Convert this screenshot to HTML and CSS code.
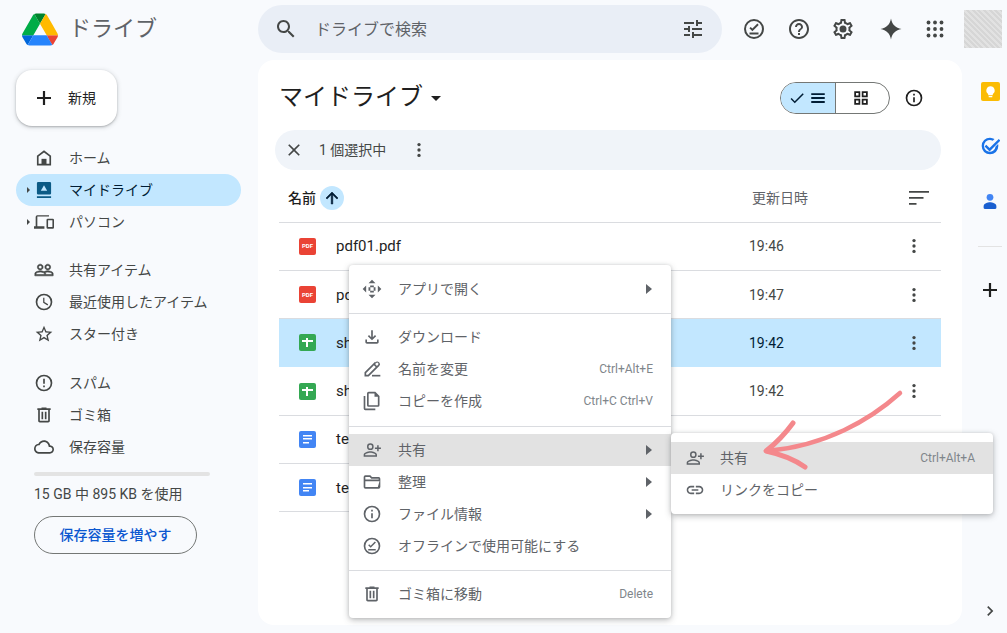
FILE: index.html
```html
<!DOCTYPE html>
<html lang="ja">
<head>
<meta charset="utf-8">
<title>ドライブ</title>
<link rel="stylesheet" href="styles.css">
</head>
<body>
<svg class="defs" xmlns="http://www.w3.org/2000/svg">
  <symbol id="i-search" viewBox="0 0 24 24"><path d="M15.5 14h-.79l-.28-.27C15.41 12.59 16 11.11 16 9.5 16 5.91 13.09 3 9.5 3S3 5.91 3 9.5 5.91 16 9.5 16c1.61 0 3.09-.59 4.23-1.57l.27.28v.79l5 4.99L20.49 19l-4.99-5zm-6 0C7.01 14 5 11.99 5 9.5S7.01 5 9.5 5 14 7.01 14 9.5 11.99 14 9.5 14z"/></symbol>
  <symbol id="i-tune" viewBox="0 0 24 24"><path d="M3 17v2h6v-2H3zM3 5v2h10V5H3zm10 16v-2h8v-2h-8v-2h-2v6h2zM7 9v2H3v2h4v2h2V9H7zm14 4v-2H11v2h10zm-6-4h2V7h4V5h-4V3h-2v6z"/></symbol>
  <symbol id="i-offline" viewBox="0 0 24 24"><path d="M12 2a10 10 0 1 0 0 20 10 10 0 0 0 0-20zm0 18a8 8 0 1 1 0-16 8 8 0 0 1 0 16z"/><path d="M7.5 15.6h9v1.8h-9zM10.4 14.2l-3-3 1.3-1.3 1.7 1.7 5-5 1.3 1.3z"/></symbol>
  <symbol id="i-help" viewBox="0 0 24 24"><path d="M11 18h2v-2h-2v2zm1-16C6.48 2 2 6.48 2 12s4.48 10 10 10 10-4.48 10-10S17.52 2 12 2zm0 18c-4.41 0-8-3.59-8-8s3.59-8 8-8 8 3.59 8 8-3.59 8-8 8zm0-14c-2.21 0-4 1.79-4 4h2c0-1.1.9-2 2-2s2 .9 2 2c0 2-3 1.75-3 5h2c0-2.25 3-2.5 3-5 0-2.21-1.79-4-4-4z"/></symbol>
  <symbol id="i-gear" viewBox="0 0 24 24"><path d="M19.43 12.98c.04-.32.07-.64.07-.98 0-.34-.03-.66-.07-.98l2.11-1.65c.19-.15.24-.42.12-.64l-2-3.46c-.09-.16-.26-.25-.44-.25-.06 0-.12.01-.17.03l-2.49 1c-.52-.4-1.08-.73-1.69-.98l-.38-2.65C14.46 2.18 14.25 2 14 2h-4c-.25 0-.46.18-.49.42l-.38 2.65c-.61.25-1.17.59-1.69.98l-2.49-1c-.06-.02-.12-.03-.18-.03-.17 0-.34.09-.43.25l-2 3.46c-.13.22-.07.49.12.64l2.11 1.65c-.04.32-.07.65-.07.98 0 .33.03.66.07.98l-2.11 1.65c-.19.15-.24.42-.12.64l2 3.46c.09.16.26.25.44.25.06 0 .12-.01.17-.03l2.49-1c.52.4 1.08.73 1.69.98l.38 2.65c.03.24.24.42.49.42h4c.25 0 .46-.18.49-.42l.38-2.65c.61-.25 1.17-.59 1.69-.98l2.49 1c.06.02.12.03.18.03.17 0 .34-.09.43-.25l2-3.46c.12-.22.07-.49-.12-.64l-2.11-1.65zm-1.98-1.71c.04.31.05.52.05.73 0 .21-.02.43-.05.73l-.14 1.13.89.7 1.08.84-.7 1.21-1.27-.51-1.04-.42-.9.68c-.43.32-.84.56-1.25.73l-1.06.43-.16 1.13-.2 1.35h-1.4l-.19-1.35-.16-1.13-1.06-.43c-.43-.18-.83-.41-1.23-.71l-.91-.7-1.06.43-1.27.51-.7-1.21 1.08-.84.89-.7-.14-1.13c-.03-.31-.05-.54-.05-.74s.02-.43.05-.73l.14-1.13-.89-.7-1.08-.84.7-1.21 1.27.51 1.04.42.9-.68c.43-.32.84-.56 1.25-.73l1.06-.43.16-1.13.2-1.35h1.39l.19 1.35.16 1.13 1.06.43c.43.18.83.41 1.23.71l.91.7 1.06-.43 1.27-.51.7 1.21-1.07.85-.89.7.14 1.13zM12 8.5a3.5 3.5 0 1 0 0 7 3.5 3.5 0 0 0 0-7z"/></symbol>
  <symbol id="i-gem" viewBox="0 0 24 24"><path d="M12 1.5c.9 5.8 4.7 9.6 10.5 10.5-5.8.9-9.6 4.7-10.5 10.5-.9-5.800-4.700-9.600-10.500-10.500C7.300 11.100 11.100 7.300 12 1.500z"/></symbol>
  <symbol id="i-apps" viewBox="0 0 24 24"><g><circle cx="5.500" cy="5.500" r="1.900"/><circle cx="12" cy="5.500" r="1.900"/><circle cx="18.500" cy="5.500" r="1.900"/><circle cx="5.500" cy="12" r="1.900"/><circle cx="12" cy="12" r="1.900"/><circle cx="18.500" cy="12" r="1.900"/><circle cx="5.500" cy="18.500" r="1.900"/><circle cx="12" cy="18.500" r="1.900"/><circle cx="18.500" cy="18.500" r="1.900"/></g></symbol>
  <symbol id="i-plus" viewBox="0 0 24 24"><path d="M19 13.100h-5.900V19h-2.200v-5.900H5v-2.200h5.900V5h2.200v5.900H19z"/></symbol>
  <symbol id="i-home" viewBox="0 0 24 24"><path d="M12 2.800 3.500 9.200V21h17V9.200L12 2.800zm6.500 16.200H5.500v-8.800L12 5.300l6.500 4.900V19z"/><path d="M9 13h6v7H9z"/></symbol>
  <symbol id="i-drive" viewBox="0 0 24 24"><path d="M5 2.500h14A1.500 1.500 0 0 1 20.500 4v12a1.500 1.500 0 0 1-1.500 1.500H5A1.500 1.500 0 0 1 3.500 16V4A1.500 1.500 0 0 1 5 2.500zM3.500 19.500h17v2h-17z"/><path fill="#c2e7ff" d="M12 6.200 8.200 12.800h7.600z"/></symbol>
  <symbol id="i-pc" viewBox="0 0 24 24"><path d="M4 5.500h14V4H4a2 2 0 0 0-2 2v11H0v3h12.500v-3H4V5.500z"/><path d="M22.500 8h-6a1.500 1.500 0 0 0-1.500 1.500v9a1.500 1.500 0 0 0 1.500 1.500h6a1.500 1.500 0 0 0 1.500-1.500v-9A1.500 1.500 0 0 0 22.500 8zm-.4 10h-5.200v-8h5.200v8z"/></symbol>
  <symbol id="i-people" viewBox="0 0 24 24"><path stroke="#444746" stroke-width=".7" d="M16.500 13c-1.200 0-3.070.34-4.500 1-1.430-.67-3.300-1-4.500-1C5.330 13 1 14.080 1 16.250V19h22v-2.750c0-2.170-4.330-3.250-6.500-3.250zm-4 4.500h-10v-1.250c0-.54 2.560-1.750 5-1.750s5 1.210 5 1.750v1.250zm9 0H14v-1.250c0-.46-.2-.86-.52-1.220.88-.3 1.960-.53 3.020-.53 2.440 0 5 1.210 5 1.750v1.250zM7.500 12c1.930 0 3.500-1.570 3.500-3.500S9.430 5 7.500 5 4 6.570 4 8.500 5.570 12 7.500 12zm0-5.500c1.100 0 2 .9 2 2s-.9 2-2 2-2-.9-2-2 .9-2 2-2zm9 5.500c1.930 0 3.500-1.570 3.500-3.500S18.430 5 16.500 5 13 6.570 13 8.500s1.570 3.500 3.500 3.500zm0-5.500c1.100 0 2 .9 2 2s-.9 2-2 2-2-.9-2-2 .9-2 2-2z"/></symbol>
  <symbol id="i-clock" viewBox="0 0 24 24"><path d="M12 2a10 10 0 1 0 0 20 10 10 0 0 0 0-20zm0 18a8 8 0 1 1 0-16 8 8 0 0 1 0 16z"/><path d="M12.500 7H11v6l5.200 3.100.8-1.300-4.500-2.700z"/></symbol>
  <symbol id="i-star" viewBox="0 0 24 24"><path d="M22 9.240l-7.190-.62L12 2 9.190 8.630 2 9.240l5.460 4.730L5.820 21 12 17.270 18.180 21l-1.630-7.030L22 9.240zM12 15.400l-3.760 2.270 1-4.280-3.320-2.880 4.380-.38L12 6.100l1.710 4.040 4.380.38-3.320 2.880 1 4.280L12 15.400z"/></symbol>
  <symbol id="i-spam" viewBox="0 0 24 24"><path d="M12 2a10 10 0 1 0 0 20 10 10 0 0 0 0-20zm0 18a8 8 0 1 1 0-16 8 8 0 0 1 0 16z"/><path d="M11 7h2v6h-2zM11 15h2v2h-2z"/></symbol>
  <symbol id="i-trash" viewBox="0 0 24 24"><path d="M15 4V3H9v1H4v2h1v13c0 1.100.9 2 2 2h10c1.100 0 2-.9 2-2V6h1V4h-5zm2 15H7V6h10v13zM9 8h2v9H9zm4 0h2v9h-2z"/></symbol>
  <symbol id="i-cloud" viewBox="0 0 24 24"><path d="M19.350 10.040C18.670 6.590 15.640 4 12 4 9.110 4 6.600 5.640 5.350 8.040 2.340 8.360 0 10.910 0 14c0 3.310 2.690 6 6 6h13c2.760 0 5-2.240 5-5 0-2.640-2.050-4.780-4.650-4.960zM19 18H6c-2.210 0-4-1.790-4-4 0-2.050 1.530-3.760 3.560-3.970l1.070-.11.5-.95C8.080 7.140 9.940 6 12 6c2.620 0 4.880 1.860 5.390 4.430l.3 1.500 1.530.11c1.560.1 2.780 1.410 2.780 2.960 0 1.650-1.350 3-3 3z"/></symbol>
  <symbol id="i-info" viewBox="0 0 24 24"><path d="M12 2a10 10 0 1 0 0 20 10 10 0 0 0 0-20zm0 18a8 8 0 1 1 0-16 8 8 0 0 1 0 16z"/><path d="M11 11h2v6h-2zM11 7h2v2h-2z"/></symbol>
  <symbol id="i-close" viewBox="0 0 24 24"><path d="M19 6.410 17.590 5 12 10.590 6.410 5 5 6.410 10.590 12 5 17.590 6.410 19 12 13.410 17.590 19 19 17.590 13.410 12z"/></symbol>
  <symbol id="i-dots" viewBox="0 0 24 24"><circle cx="12" cy="5.500" r="2"/><circle cx="12" cy="12" r="2"/><circle cx="12" cy="18.500" r="2"/></symbol>
  <symbol id="i-check" viewBox="0 0 24 24"><path d="M9 16.200 4.800 12l-1.400 1.400L9 19 21 7l-1.400-1.400z"/></symbol>
  <symbol id="i-menu" viewBox="0 0 24 24"><path d="M3 18.500h18v-2.400H3zM3 13.200h18v-2.400H3zM3 5.500v2.400h18V5.500z"/></symbol>
  <symbol id="i-grid" viewBox="0 0 24 24"><path d="M3 3h8v8H3zm2.300 2.300v3.400h3.400V5.300zM13 3h8v8h-8zm2.300 2.300v3.400h3.400V5.300zM3 13h8v8H3zm2.300 2.300v3.400h3.400v-3.400zM13 13h8v8h-8zm2.300 2.300v3.400h3.400v-3.400z"/></symbol>
  <symbol id="i-up" viewBox="0 0 24 24"><path stroke="#001d35" stroke-width=".8" d="M4 12l1.410 1.410L11 7.830V20h2V7.830l5.580 5.590L20 12l-8-8z"/></symbol>
  <symbol id="i-sort" viewBox="0 0 24 24"><path d="M2 5h20v1.800H2zM2 11h14.500v1.800H2zM2 17h7.500v1.800H2z"/></symbol>
  <symbol id="i-open" viewBox="0 0 24 24"><path d="M12 .8 7.800 5h8.400zM12 23.200 16.200 19H7.800zM.8 12 5 16.200V7.800zM23.200 12 19 7.800v8.400z"/><path d="M9.800 7.800h4.400v2.200H9.800zM9.800 14h4.400v2.200H9.800zM7.800 9.800H10v4.400H7.800zM14 9.800h2.200v4.400H14z"/></symbol>
  <symbol id="i-download" viewBox="0 0 24 24"><path d="M18 15v3H6v-3H4v3c0 1.100.9 2 2 2h12c1.100 0 2-.9 2-2v-3h-2zm-1-4-1.410-1.410L13 12.170V4h-2v8.170L8.410 9.590 7 11l5 5 5-5z"/></symbol>
  <symbol id="i-rename" viewBox="0 0 24 24"><path d="M15.700 3.300 3 16v5h5L20.700 8.300a2.800 2.800 0 0 0 0-4 3.600 3.600 0 0 0-5 0zM7.200 19H5v-2.200l9.300-9.300 2.200 2.200L7.200 19zM19.300 6.900l-1.400 1.400-2.200-2.200 1.400-1.400a1.550 1.550 0 0 1 2.200 2.200z"/><path d="M12 19h10v2H12z"/></symbol>
  <symbol id="i-copy" viewBox="0 0 24 24"><path d="M16 1H8a2 2 0 0 0-2 2v14a2 2 0 0 0 2 2h11a2 2 0 0 0 2-2V6zm3 16H8V3h7v4h4z"/><path d="M4 6H2v15a2 2 0 0 0 2 2h12v-2H4z"/></symbol>
  <symbol id="i-share" viewBox="0 0 24 24"><path d="M10 12a4 4 0 1 0 0-8 4 4 0 0 0 0 8zm0-6.200a2.200 2.200 0 1 1 0 4.400 2.200 2.200 0 0 1 0-4.400zM10 13.500c-3 0-8 1.500-8 4.200V20h16v-2.300c0-2.700-5-4.200-8-4.200zm6.200 4.700H3.800v-.5c0-.9 3.300-2.400 6.200-2.400s6.200 1.500 6.200 2.400zM20 9V6.300h-1.800V9h-2.700v1.800h2.700v2.700H20v-2.700h2.700V9z"/></symbol>
  <symbol id="i-folder" viewBox="0 0 24 24"><path d="M20 6h-8l-2-2H4a2 2 0 0 0-2 2v12a2 2 0 0 0 2 2h16a2 2 0 0 0 2-2V8a2 2 0 0 0-2-2zM4 6h5.200l2 2H20v1H4zm0 12V11h17l-2 7z"/></symbol>
  <symbol id="i-link" viewBox="0 0 24 24"><path d="M3.900 12c0-1.710 1.390-3.100 3.100-3.100h4V7H7c-2.760 0-5 2.240-5 5s2.240 5 5 5h4v-1.900H7c-1.710 0-3.100-1.390-3.100-3.100zM8 13h8v-2H8v2zm9-6h-4v1.900h4c1.710 0 3.100 1.390 3.100 3.100s-1.390 3.100-3.100 3.100h-4V17h4c2.760 0 5-2.240 5-5s-2.240-5-5-5z"/></symbol>
  <symbol id="i-chevron" viewBox="0 0 24 24"><path d="M10 6 8.600 7.400l4.600 4.600-4.600 4.600L10 18l6-6z"/></symbol>
</svg>

<div class="app">
  <header class="topbar">
    <div class="brand">
      <svg class="logo" viewBox="0 0 87.300 78" xmlns="http://www.w3.org/2000/svg">
        <path d="m6.600 66.850 3.850 6.650c.8 1.400 1.950 2.500 3.300 3.300l13.750-23.800h-27.500c0 1.550.4 3.100 1.200 4.500z" fill="#0066da"/>
        <path d="m43.650 25-13.750-23.800c-1.350.8-2.500 1.900-3.300 3.300l-25.400 44a9.060 9.060 0 0 0 -1.200 4.500h27.500z" fill="#00ac47"/>
        <path d="m73.550 76.800c1.350-.8 2.500-1.900 3.300-3.300l1.600-2.750 7.650-13.250c.8-1.400 1.200-2.950 1.200-4.500h-27.502l5.852 11.500z" fill="#ea4335"/>
        <path d="m43.650 25 13.750-23.800c-1.350-.8-2.900-1.200-4.500-1.200h-18.500c-1.600 0-3.150.45-4.500 1.200z" fill="#00832d"/>
        <path d="m59.800 53h-32.300l-13.750 23.800c1.350.8 2.900 1.200 4.500 1.200h50.800c1.600 0 3.150-.45 4.500-1.200z" fill="#2684fc"/>
        <path d="m73.400 26.500-12.700-22c-.8-1.400-1.950-2.500-3.300-3.300l-13.750 23.800 16.150 28h27.450c0-1.550-.4-3.100-1.200-4.500z" fill="#ffba00"/>
      </svg>
      <span class="brand-name">ドライブ</span>
    </div>
    <div class="search">
      <svg class="ic ic-24"><use href="#i-search"/></svg>
      <span class="search-text">ドライブで検索</span>
      <svg class="ic ic-24"><use href="#i-tune"/></svg>
    </div>
    <div class="tools">
      <svg class="ic ic-24"><use href="#i-offline"/></svg>
      <svg class="ic ic-24"><use href="#i-help"/></svg>
      <svg class="ic ic-24"><use href="#i-gear"/></svg>
      <svg class="ic ic-24 tool-gem"><use href="#i-gem"/></svg>
      <svg class="ic ic-24"><use href="#i-apps"/></svg>
      <div class="avatar"></div>
    </div>
  </header>

  <div class="workspace">
    <aside class="sidebar">
      <button class="new-btn">
        <svg class="ic ic-24 dark"><use href="#i-plus"/></svg>
        <span>新規</span>
      </button>
      <nav class="nav-group">
        <div class="nav-item"><span class="caret-slot"></span><svg class="ic ic-20"><use href="#i-home"/></svg><span>ホーム</span></div>
        <div class="nav-item selected"><span class="caret-slot"><i class="caret"></i></span><svg class="ic ic-20 drive-ic"><use href="#i-drive"/></svg><span>マイドライブ</span></div>
        <div class="nav-item"><span class="caret-slot"><i class="caret"></i></span><svg class="ic ic-20"><use href="#i-pc"/></svg><span>パソコン</span></div>
      </nav>
      <nav class="nav-group">
        <div class="nav-item"><span class="caret-slot"></span><svg class="ic ic-20"><use href="#i-people"/></svg><span>共有アイテム</span></div>
        <div class="nav-item"><span class="caret-slot"></span><svg class="ic ic-20"><use href="#i-clock"/></svg><span>最近使用したアイテム</span></div>
        <div class="nav-item"><span class="caret-slot"></span><svg class="ic ic-20"><use href="#i-star"/></svg><span>スター付き</span></div>
      </nav>
      <nav class="nav-group nav-group-last">
        <div class="nav-item"><span class="caret-slot"></span><svg class="ic ic-20"><use href="#i-spam"/></svg><span>スパム</span></div>
        <div class="nav-item"><span class="caret-slot"></span><svg class="ic ic-20"><use href="#i-trash"/></svg><span>ゴミ箱</span></div>
        <div class="nav-item"><span class="caret-slot"></span><svg class="ic ic-20"><use href="#i-cloud"/></svg><span>保存容量</span></div>
      </nav>
      <div class="storage">
        <div class="storage-bar"></div>
        <div class="storage-text">15 GB 中 895 KB を使用</div>
        <button class="storage-btn">保存容量を増やす</button>
      </div>
    </aside>

    <main class="card">
      <div class="title-row">
        <h1 class="title">マイドライブ</h1>
        <i class="title-caret"></i>
        <div class="view-toggle">
          <div class="view-on"><svg class="ic ic-18 navy"><use href="#i-check"/></svg><svg class="ic ic-18 navy"><use href="#i-menu"/></svg></div>
          <div class="view-off"><svg class="ic ic-18 dark"><use href="#i-grid"/></svg></div>
        </div>
        <svg class="ic ic-20 dark info"><use href="#i-info"/></svg>
      </div>

      <div class="selection">
        <svg class="ic ic-20"><use href="#i-close"/></svg>
        <span class="selection-text">1 個選択中</span>
        <svg class="ic ic-20"><use href="#i-dots"/></svg>
      </div>

      <div class="list-head">
        <div class="head-name"><span class="head-label">名前</span><span class="sort-btn"><svg class="ic ic-18 navy"><use href="#i-up"/></svg></span></div>
        <div class="head-date">更新日時</div>
        <svg class="ic ic-24"><use href="#i-sort"/></svg>
      </div>

      <div class="row">
        <div class="row-name"><span class="file file-pdf">PDF</span><span>pdf01.pdf</span></div>
        <div class="row-date">19:46</div>
        <svg class="ic ic-20"><use href="#i-dots"/></svg>
      </div>
      <div class="row">
        <div class="row-name"><span class="file file-pdf">PDF</span><span>pdf02.pdf</span></div>
        <div class="row-date">19:47</div>
        <svg class="ic ic-20"><use href="#i-dots"/></svg>
      </div>
      <div class="row row-selected">
        <div class="row-name"><span class="file file-sheet"><i></i></span><span>sheet01</span></div>
        <div class="row-date">19:42</div>
        <svg class="ic ic-20"><use href="#i-dots"/></svg>
      </div>
      <div class="row">
        <div class="row-name"><span class="file file-sheet"><i></i></span><span>sheet02</span></div>
        <div class="row-date">19:42</div>
        <svg class="ic ic-20"><use href="#i-dots"/></svg>
      </div>
      <div class="row">
        <div class="row-name"><span class="file file-doc"><i></i></span><span>text01</span></div>
      </div>
      <div class="row">
        <div class="row-name"><span class="file file-doc"><i></i></span><span>text02</span></div>
      </div>
    </main>

    <aside class="rail">
      <div class="rail-keep">
        <svg viewBox="0 0 18 18" class="rail-keep-ic"><path fill="#fff" d="M9 4a4 4 0 0 0-2.200 7.300V12.500h4.400v-1.200A4 4 0 0 0 9 4zM7.300 13.300h3.400v1.200H7.300z"/></svg>
      </div>
      <svg class="rail-tasks" viewBox="0 0 24 24"><path fill="#1a73e8" d="M12 2a10 10 0 1 0 10 10c0-.8-.1-1.600-.3-2.400l-3 3A7 7 0 1 1 15.300 5.800l2.100-2.100A10 10 0 0 0 12 2z"/><path fill="#1a73e8" d="M22.500 3.500 11.500 14.500 7.500 10.500l-2 2 6 6 13-13z"/></svg>
      <svg class="rail-contact" viewBox="0 0 24 24"><circle cx="12" cy="7" r="4.500" fill="#4285f4"/><path fill="#1a5fd0" d="M3.500 21v-2.500c0-3.300 5.500-5 8.500-5s8.500 1.700 8.500 5V21a1.500 1.500 0 0 1-1.500 1.500H5A1.500 1.500 0 0 1 3.500 21z"/></svg>
      <div class="rail-divider"></div>
      <svg class="ic ic-24 dark rail-plus"><use href="#i-plus"/></svg>
      <svg class="ic ic-20 rail-chevron"><use href="#i-chevron"/></svg>
    </aside>
  </div>

  <div class="menu context-menu">
    <div class="menu-item"><svg class="ic ic-20"><use href="#i-open"/></svg><span class="menu-label">アプリで開く</span><i class="menu-arrow"></i></div>
    <div class="menu-sep"></div>
    <div class="menu-item"><svg class="ic ic-20"><use href="#i-download"/></svg><span class="menu-label">ダウンロード</span></div>
    <div class="menu-item"><svg class="ic ic-20"><use href="#i-rename"/></svg><span class="menu-label">名前を変更</span><span class="shortcut">Ctrl+Alt+E</span></div>
    <div class="menu-item"><svg class="ic ic-20"><use href="#i-copy"/></svg><span class="menu-label">コピーを作成</span><span class="shortcut">Ctrl+C Ctrl+V</span></div>
    <div class="menu-sep"></div>
    <div class="menu-item active"><svg class="ic ic-20"><use href="#i-share"/></svg><span class="menu-label">共有</span><i class="menu-arrow"></i></div>
    <div class="menu-item"><svg class="ic ic-20"><use href="#i-folder"/></svg><span class="menu-label">整理</span><i class="menu-arrow"></i></div>
    <div class="menu-item"><svg class="ic ic-20"><use href="#i-info"/></svg><span class="menu-label">ファイル情報</span><i class="menu-arrow"></i></div>
    <div class="menu-item"><svg class="ic ic-20"><use href="#i-offline"/></svg><span class="menu-label">オフラインで使用可能にする</span></div>
    <div class="menu-sep"></div>
    <div class="menu-item"><svg class="ic ic-20"><use href="#i-trash"/></svg><span class="menu-label">ゴミ箱に移動</span><span class="shortcut">Delete</span></div>
  </div>

  <div class="menu sub-menu">
    <div class="menu-item active"><svg class="ic ic-20"><use href="#i-share"/></svg><span class="menu-label">共有</span><span class="shortcut">Ctrl+Alt+A</span></div>
    <div class="menu-item"><svg class="ic ic-20"><use href="#i-link"/></svg><span class="menu-label">リンクをコピー</span></div>
  </div>

  <svg class="annotation" viewBox="0 0 1007 633" xmlns="http://www.w3.org/2000/svg">
    <path d="M900 393C870 420 825 446 767 451" fill="none" stroke="#f4888c" stroke-width="4.500" stroke-linecap="round"/>
    <path d="M793 423C785 434 775 444 766 451C780 454 795 460 805 467" fill="none" stroke="#f4888c" stroke-width="5" stroke-linecap="round" stroke-linejoin="round"/>
  </svg>
</div>
</body>
</html>
```

FILE: styles.css
```css
* { box-sizing: border-box; }
html, body { margin: 0; padding: 0; height: 100%; overflow: hidden; }
body {
  background: #f8fafd;
  color: #444746;
  font-family: Roboto, "Noto Sans CJK JP", sans-serif;
  font-size: 14px;
}
.defs { display: none; }

.ic { display: block; flex: none; fill: #444746; }
.ic-24 { width: 24px; height: 24px; }
.ic-20 { width: 20px; height: 20px; }
.ic-18 { width: 18px; height: 18px; }
.dark { fill: #1f1f1f; }
.navy { fill: #001d35; }

.app { position: relative; width: 1007px; height: 633px; display: flex; flex-direction: column; }

/* top bar */
.topbar { height: 58px; flex: none; display: flex; align-items: center; }
.brand { width: 258px; flex: none; display: flex; align-items: center; padding-left: 22px; gap: 11px; }
.logo { width: 36px; height: 33px; display: block; }
.brand-name { font-size: 22px; color: #5f6368; line-height: 32px; }
.search {
  width: 464px; height: 48px; flex: none;
  background: #e9eef6; border-radius: 24px;
  display: flex; align-items: center;
  padding: 0 17px 0 16px;
}
.search-text { flex: 1; margin-left: 17px; padding-bottom: 2px; font-size: 16px; color: #5f6368; }
.tools { display: flex; align-items: center; gap: 20.5px; margin-left: 20px; }
.tool-gem { margin-left: 3px; }
.avatar {
  width: 38px; height: 38px; margin-left: -3.5px;
  background: repeating-linear-gradient(45deg, #d6d6d6 0 2px, #e2e2e2 2px 4px);
}

/* layout */
.workspace { flex: 1; min-height: 0; display: flex; }

/* sidebar */
.sidebar { width: 258px; flex: none; }
.new-btn {
  display: flex; align-items: center; gap: 12px;
  width: 101px; height: 56px; margin: 12px 0 16px 16px; padding: 0 0 0 16px;
  background: #fff; border: 0; border-radius: 16px;
  box-shadow: 0 1px 2px rgba(60,64,67,.3), 0 1px 4px 1px rgba(60,64,67,.15);
  font: inherit; color: #1f1f1f;
}
.new-btn span { padding-bottom: 3px; }
.nav-group { margin-bottom: 16px; }
.nav-group-last { margin-top: 17px; margin-bottom: 9px; }
.nav-item {
  display: flex; align-items: center;
  width: 225px; height: 32px; margin-left: 16px; padding-left: 9px;
  border-radius: 16px; color: #444746;
}
.nav-item > span:last-child { margin-left: 15px; padding-bottom: 2px; }
.nav-item.selected { background: #c2e7ff; color: #001d35; }
.caret-slot { width: 9px; flex: none; display: flex; align-items: center; }
.caret { width: 0; height: 0; border-left: 3px solid #444746; border-top: 3px solid transparent; border-bottom: 3px solid transparent; margin-left: 2px; }
.drive-ic { fill: #0b5a85; }

.storage { padding-left: 34px; }
.storage-bar { width: 176px; height: 4px; border-radius: 2px; background: #e3e3e3; }
.storage-text { margin-top: 9px; line-height: 18px; color: #444746; }
.storage-btn {
  display: block; width: 163px; height: 38px; margin-top: 13px; padding: 0 0 2px;
  background: transparent; border: 1px solid #747775; border-radius: 19px;
  font: inherit; font-weight: 500; color: #0b57d0;
}

/* main card */
.card {
  width: 704px; flex: none; margin: 2px 0 8px;
  background: #fff; border-radius: 16px;
  padding: 22px 21px 0 21px;
}
.title-row { display: flex; align-items: center; height: 32px; }
.title { margin: -2px 0 0; font-size: 24px; font-weight: 400; line-height: 32px; color: #1f1f1f; }
.title-caret { width: 0; height: 0; margin: 0 0 0 8px; border-top: 5px solid #1f1f1f; border-left: 5px solid transparent; border-right: 5px solid transparent; }
.view-toggle {
  display: flex; width: 110px; height: 32px; margin-left: auto;
  border: 1px solid #747775; border-radius: 16px; overflow: hidden;
}
.view-on {
  width: 55px; display: flex; align-items: center; justify-content: center; gap: 3px; padding-right: 2px;
  background: #c2e7ff; border-right: 1px solid #747775;
}
.view-off { flex: 1; display: flex; align-items: center; justify-content: center; padding-right: 4px; }
.info { margin: 0 17px 0 14px; }

.selection {
  display: flex; align-items: center;
  height: 40px; margin: 16px 0 4px -4px; padding-left: 9px;
  background: #f0f4f9; border-radius: 20px;
}
.selection-text { width: 90px; margin-left: 15px; padding-bottom: 2px; color: #444746; }

.list-head {
  display: grid; grid-template-columns: 473px 1fr 24px;
  align-items: center; height: 48.6px; padding-right: 10px;
  border-bottom: 1px solid #dadce0;
}
.head-name { display: flex; align-items: center; gap: 4px; padding-left: 9px; font-weight: 500; color: #1f1f1f; }
.head-label { padding-bottom: 2px; }
.sort-btn { width: 24px; height: 24px; border-radius: 50%; background: #c2e7ff; display: flex; align-items: center; justify-content: center; }
.head-date { padding-bottom: 2px; color: #5f6368; }

.row {
  display: grid; grid-template-columns: 470px 1fr 20px;
  align-items: center; height: 48.3px; padding-right: 17px;
  border-bottom: 1px solid #dadce0;
}
.row-selected { background: #c2e7ff; border-bottom-color: #c2e7ff; }
.row-name { display: flex; align-items: center; gap: 20px; padding-left: 20px; font-size: 15px; color: #1f1f1f; }
.row-date { color: #444746; }
.row-selected .row-date { color: #001d35; }

.file {
  width: 17px; height: 17px; flex: none; border-radius: 2px;
  display: flex; align-items: center; justify-content: center;
  color: #fff; font-size: 6px; font-weight: 700; line-height: 1;
}
.file-pdf { background: #ea4335; }
.file-sheet { background: #34a853; }
.file-sheet i { width: 11px; height: 9px; background:
  linear-gradient(#fff, #fff) 0 2px / 11px 2px no-repeat,
  linear-gradient(#fff, #fff) 4px 0 / 2px 9px no-repeat; }
.file-doc { background: #4285f4; }
.file-doc i { width: 9px; height: 9px; background:
  linear-gradient(#fff, #fff) 0 0 / 9px 1.5px no-repeat,
  linear-gradient(#fff, #fff) 0 3.5px / 9px 1.5px no-repeat,
  linear-gradient(#fff, #fff) 0 7px / 6px 1.5px no-repeat; }

/* right rail */
.rail { flex: 1; display: flex; flex-direction: column; align-items: center; padding: 0 0 12px 11px; }
.rail-keep { width: 19px; height: 19px; margin-top: 24px; background: #fbbc04; border-radius: 2px; flex: none; }
.rail-keep-ic { display: block; width: 19px; height: 19px; }
.rail-tasks { width: 20px; height: 20px; margin-top: 35px; flex: none; }
.rail-contact { width: 18px; height: 18px; margin-top: 36px; flex: none; }
.rail-divider { width: 24px; height: 1px; margin-top: 36px; background: #e3e3e3; flex: none; }
.rail-plus { margin-top: 31px; }
.rail-chevron { margin-top: auto; }

/* menus */
.menu {
  position: absolute; background: #fff; border-radius: 4px;
  box-shadow: 0 2px 6px rgba(60,64,67,.35), 0 0 3px rgba(60,64,67,.12);
  color: #5f6368;
}
.context-menu { left: 349px; top: 265px; width: 322px; padding: 8px 0; }
.sub-menu { left: 671px; top: 433px; width: 322px; padding: 9px 0 8px; }
.menu-item { display: flex; align-items: center; height: 32.15px; padding: 0 18px 0 13px; }
.sub-menu .menu-item { padding-left: 14px; }
.menu-item.active { background: #e2e2e2; }
.menu-label { flex: 1; margin-left: 16px; padding-bottom: 2px; color: #5f6368; }
.sub-menu .menu-label { margin-left: 15px; }
.context-menu .ic, .sub-menu .ic { fill: #5f6368; }
.menu-sep { height: 1px; margin: 8px 0 7px; background: #dadce0; }
.shortcut { font-size: 12px; color: #80868b; }
.menu-arrow { width: 0; height: 0; margin-right: 1px; border-left: 6px solid #5f6368; border-top: 5px solid transparent; border-bottom: 5px solid transparent; }

/* hand-drawn arrow over the screenshot */
.annotation { position: absolute; left: 0; top: 0; width: 1007px; height: 633px; pointer-events: none; }
```
